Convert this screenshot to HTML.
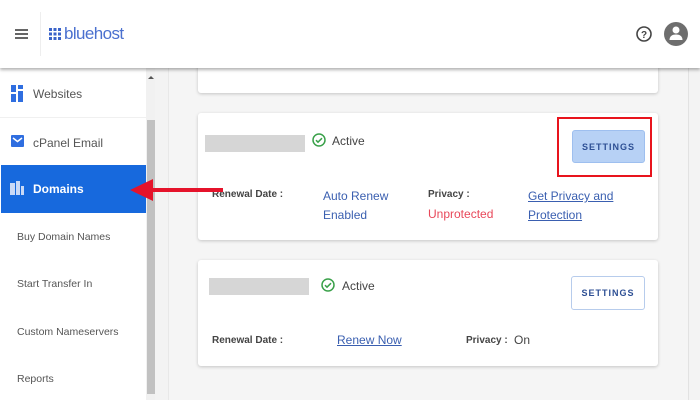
<!DOCTYPE html>
<html><head><meta charset="utf-8"><style>
*{margin:0;padding:0;box-sizing:border-box}
body{width:700px;height:400px;overflow:hidden;background:#f3f3f3;font-family:"Liberation Sans",sans-serif;position:relative}
.hdr{position:absolute;left:0;top:0;width:700px;height:68px;background:#fff;box-shadow:0 2px 3px rgba(0,0,0,.3);z-index:5}
.abs{position:absolute}
.side{position:absolute;left:0;top:68px;width:155px;height:332px;background:#fff;border-right:1px solid #e4e4e4}
.item{position:absolute;left:17px;font-size:12px;color:#555}
.main{position:absolute;left:168px;top:68px;width:521px;height:332px;background:#f5f5f5;border-left:1px solid #e8e8e8;border-right:1px solid #e2e2e2}
.card{position:absolute;left:198px;width:460px;background:#fff;border-radius:3px;box-shadow:0 1px 3px rgba(0,0,0,.2)}
.t{position:absolute;font-size:12px}
.lbl{color:#444;font-weight:bold;font-size:10px}
.blue{color:#3a5fb0}
.btn{position:absolute;font-size:9px;font-weight:bold;letter-spacing:1px;color:#2d4f94;text-align:center;border-radius:3px}
.gray{position:absolute;background:#d6d6d6}
</style></head><body>
<div class="hdr">
 <div class="abs" style="left:15px;top:29px;width:13px;height:2px;background:#666;box-shadow:0 4px 0 #666,0 8px 0 #666"></div>
 <div class="abs" style="left:40px;top:12px;width:1px;height:44px;background:#eee"></div>
 <svg class="abs" style="left:49px;top:28px" width="12" height="12"><g fill="#3a63c9"><rect x="0" y="0" width="3" height="3"/><rect x="4.5" y="0" width="3" height="3"/><rect x="9" y="0" width="3" height="3"/><rect x="0" y="4.5" width="3" height="3"/><rect x="4.5" y="4.5" width="3" height="3"/><rect x="9" y="4.5" width="3" height="3"/><rect x="0" y="9" width="3" height="3"/><rect x="4.5" y="9" width="3" height="3"/><rect x="9" y="9" width="3" height="3"/></g></svg>
 <div class="abs" style="left:64px;top:24px;font-size:17px;color:#4a70cf;letter-spacing:-.6px">bluehost</div>
 <svg class="abs" style="left:636px;top:26px" width="16" height="16"><circle cx="8" cy="8" r="7" fill="none" stroke="#444" stroke-width="1.6"/><text x="8" y="12" font-size="10" text-anchor="middle" fill="#444" font-family="Liberation Sans" font-weight="bold">?</text></svg>
 <svg class="abs" style="left:664px;top:20px" width="24" height="28"><circle cx="12" cy="14" r="12" fill="#6e6e6e"/><circle cx="12" cy="10" r="3.5" fill="#fff"/><path d="M5.5 20c0-4 3-5.5 6.5-5.5s6.5 1.5 6.5 5.5z" fill="#fff"/></svg>
</div>
<div class="side">
 <svg class="abs" style="left:11px;top:17px" width="12" height="17"><g fill="#2f6ee0"><rect x="0" y="0" width="5" height="7"/><rect x="7" y="0" width="5" height="4"/><rect x="0" y="9" width="5" height="8"/><rect x="7" y="6" width="5" height="11"/></g></svg>
 <div class="item" style="left:33px;top:19px;font-size:12px">Websites</div>
 <div class="abs" style="left:0;top:49px;width:146px;height:1px;background:#f0f0f0"></div>
 <svg class="abs" style="left:11px;top:67px" width="13" height="12"><rect width="13" height="12" rx="1" fill="#2f6ee0"/><path d="M2 3l4.5 3.5L11 3" stroke="#fff" stroke-width="1.5" fill="none"/></svg>
 <div class="item" style="left:33px;top:68px">cPanel Email</div>
 <div class="abs" style="left:1px;top:97px;width:145px;height:48px;background:#1769dd"></div>
 <svg class="abs" style="left:10px;top:113px" width="14" height="14"><g fill="#c9d9f6"><rect x="0" y="2" width="5" height="12"/><rect x="6" y="0" width="4" height="14"/><rect x="11" y="5" width="3" height="9"/></g></svg>
 <div class="item" style="left:33px;top:114px;color:#fff;font-weight:bold;font-size:12px">Domains</div>
 <div class="item" style="top:163px;font-size:10.5px">Buy Domain Names</div>
 <div class="item" style="top:210px;font-size:10.5px">Start Transfer In</div>
 <div class="item" style="top:258px;font-size:10.5px">Custom Nameservers</div>
 <div class="item" style="top:305px;font-size:10.5px">Reports</div>
 <div class="abs" style="left:146px;top:0;width:9px;height:332px;background:#f1f1f1"></div>
 <div class="abs" style="left:147px;top:52px;width:8px;height:274px;background:#c1c1c1"></div>
 <div class="abs" style="left:148px;top:8px;border:3px solid transparent;border-bottom:3px solid #555;border-top:0"></div>
</div>
<div class="main"></div>
<div class="card" style="top:60px;height:33px"></div>
<div class="card" style="top:113px;height:127px">
 <div class="gray" style="left:7px;top:22px;width:100px;height:17px"></div>
 <svg class="abs" style="left:114px;top:20px" width="14" height="14"><circle cx="7" cy="7" r="6" fill="none" stroke="#3aa14a" stroke-width="1.5"/><path d="M4 7.2l2 2 4-4" stroke="#3aa14a" stroke-width="1.5" fill="none"/></svg>
 <div class="t" style="left:134px;top:21px;color:#444">Active</div>
 <div class="btn" style="left:374px;top:17px;width:73px;height:33px;line-height:33px;background:#b7d1f5;border:1px solid #9ebfef">SETTINGS</div>
 <div class="abs" style="left:359px;top:4px;width:95px;height:60px;border:2px solid #e8141d"></div>
 <div class="t lbl" style="left:14px;top:76px">Renewal Date :</div>
 <div class="t blue" style="left:125px;top:74px;line-height:19px">Auto Renew<br>Enabled</div>
 <div class="t lbl" style="left:230px;top:76px">Privacy :</div>
 <div class="t" style="left:230px;top:94px;color:#e8485a">Unprotected</div>
 <div class="t blue" style="left:330px;top:74px;line-height:19px;text-decoration:underline">Get Privacy and<br>Protection</div>
</div>
<div class="card" style="top:260px;height:106px">
 <div class="gray" style="left:11px;top:18px;width:100px;height:17px"></div>
 <svg class="abs" style="left:123px;top:18px" width="14" height="14"><circle cx="7" cy="7" r="6" fill="none" stroke="#3aa14a" stroke-width="1.5"/><path d="M4 7.2l2 2 4-4" stroke="#3aa14a" stroke-width="1.5" fill="none"/></svg>
 <div class="t" style="left:144px;top:19px;color:#444">Active</div>
 <div class="btn" style="left:373px;top:16px;width:74px;height:34px;line-height:32px;background:#fff;border:1px solid #b7ccec">SETTINGS</div>
 <div class="t lbl" style="left:14px;top:75px">Renewal Date :</div>
 <div class="t blue" style="left:139px;top:73px;text-decoration:underline">Renew Now</div>
 <div class="t lbl" style="left:268px;top:75px">Privacy :</div>
 <div class="t" style="left:316px;top:73px;color:#444">On</div>
</div>
<svg class="abs" style="left:128px;top:176px;z-index:6" width="100" height="30"><path d="M14 14H95" stroke="#e5132b" stroke-width="4"/><path d="M2 14L25 3V25z" fill="#e5132b"/></svg>
</body></html>
